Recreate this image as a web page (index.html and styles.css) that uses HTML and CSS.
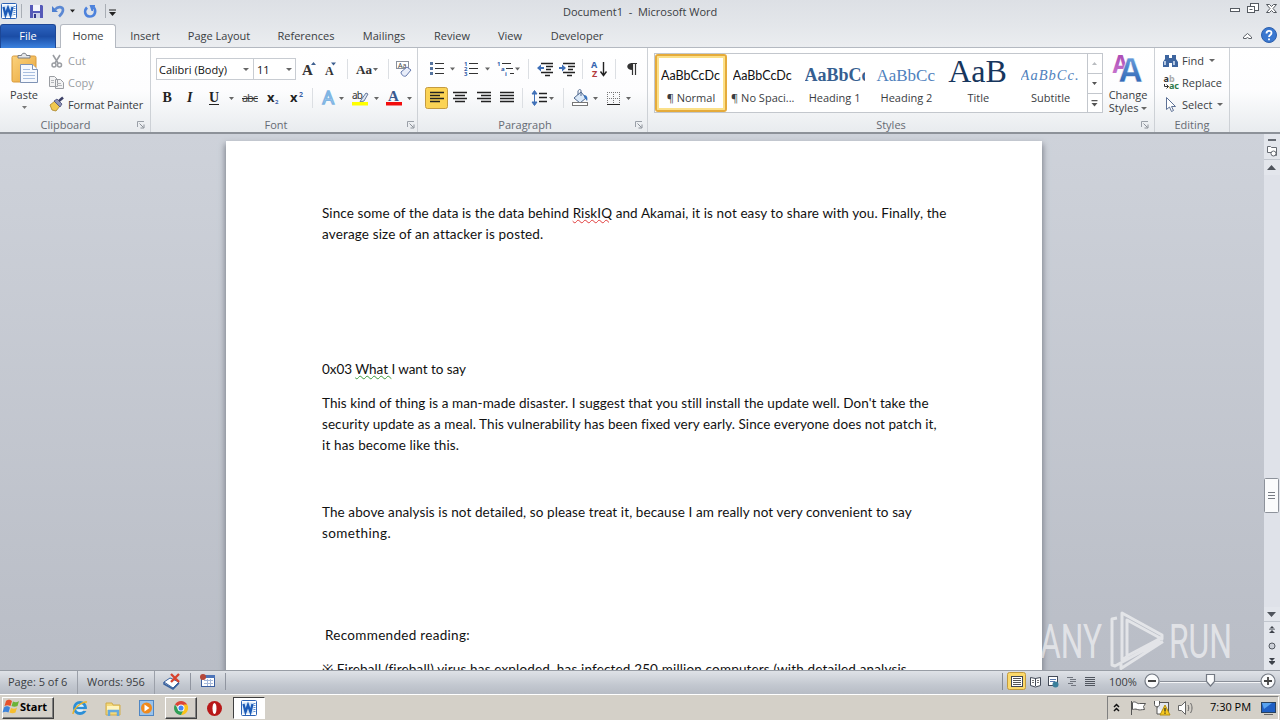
FILE: index.html
```html
<!DOCTYPE html>
<html lang="en">
<head>
<meta charset="utf-8">
<title>Document1 - Microsoft Word</title>
<link rel="stylesheet" href="styles.css">
</head>
<body>
<div class="screen">
<svg width="0" height="0" class="defs">
  <defs>
    <linearGradient id="blue" x1="0" y1="0" x2="0" y2="1"><stop offset="0" stop-color="#7fb2ea"/><stop offset="1" stop-color="#1d54a8"/></linearGradient>
    <linearGradient id="purple" x1="0" y1="0" x2="0" y2="1"><stop offset="0" stop-color="#a03aa8"/><stop offset="1" stop-color="#cf7fd6"/></linearGradient>
    <linearGradient id="orange" x1="0" y1="0" x2="1" y2="1"><stop offset="0" stop-color="#fbd27c"/><stop offset="1" stop-color="#e9a63c"/></linearGradient>
    <symbol id="word" viewBox="0 0 16 16"><rect x=".5" y=".5" width="15" height="15" rx="1" fill="#fff" stroke="#2c62b4"/><path d="M12 3.500h2.500M12 5.500h2.500M12 7.500h2.500M12 9.500h2.500M12 11.500h2.500" stroke="#5f8fd0"/><path d="M1.500 2.500h11v11h-11z" fill="#cfe2f7"/><path d="M2.500 4l2 8 2.500-7 2.500 7 2-8" fill="none" stroke="#1d5cb8" stroke-width="2.300"/></symbol>
    <symbol id="launch" viewBox="0 0 8 8"><path d="M.5 6V.5H7" fill="none" stroke="#9aa0a8"/><path d="M2.500 2.500l4 4M7 3.500V7H3.500" fill="none" stroke="#8a9098"/></symbol>
  </defs>
</svg>

<header class="titlebar">
  <svg class="i" width="130" height="24" viewBox="0 0 130 24">
    <use href="#word" x="1" y="3" width="16" height="16"/>
    <path d="M21.500 4v14M105.500 4v14" stroke="#a9aeb5"/>
    <path d="M30 5h12l1 1v12H30z" fill="#5559b8"/><path d="M33 5h7v6h-7z" fill="#f4f5fb"/><path d="M33 13h7v5h-7z" fill="#cdd1ea"/><path d="M34 14h2v4h-2z" fill="#33388c"/>
    <path d="M52 6v6h6z" fill="#4d7fd1"/><path d="M55 9.500c3-3.500 8-3 8 .5 0 3-2 4.500-4 6.500" fill="none" stroke="#5b88d3" stroke-width="2.600"/>
    <path d="M70 9.500h5l-2.500 3zM109 12h7l-3.500 4zM109 9.500h7v1h-7z" fill="#222"/>
    <path d="M87 7.500c-3 3-2.500 8.500 2.500 9 6 0 7-6 4-9.500" fill="none" stroke="#4d82dc" stroke-width="2.600"/><path d="M89.500 5h5.500v1.500l-2 1v3.500h-1.500z" fill="#4d82dc"/>
  </svg>
  <h1 class="title">Document1 &nbsp;-&nbsp; Microsoft Word</h1>
  <svg class="i" width="54" height="24" viewBox="1226 0 54 24" fill="#fff" stroke="#555a61">
    <rect x="1230.500" y="8.500" width="9" height="3"/>
    <rect x="1250.500" y="3.500" width="8" height="7"/><rect x="1247.500" y="6.500" width="7" height="6"/><path d="M1249.500 9.500h3"/>
    <path d="M1266.500 4.500h3l2 2 2-2h3l-3.500 4 3.500 4h-3l-2-2-2 2h-3l3.500-4z"/>
  </svg>
</header>

<nav class="tabs">
  <a class="tab file">File</a>
  <a class="tab home">Home</a>
  <a class="tab w58">Insert</a>
  <a class="tab w90">Page Layout</a>
  <a class="tab w84">References</a>
  <a class="tab w72">Mailings</a>
  <a class="tab w64">Review</a>
  <a class="tab w52">View</a>
  <a class="tab w82">Developer</a>
  <svg class="i end" width="40" height="24" viewBox="1240 24 40 24">
    <path d="M1243.500 38.500v-1.500l4-3.500 4 3.500v1.500h-2.500l-1.500-1-1.500 1z" fill="#fff" stroke="#5b6068"/>
    <circle cx="1269" cy="35" r="7.500" fill="#3a78d0" stroke="#2d60ad"/><path d="M1266.500 33.500c0-3.500 5-3.500 5-.5 0 2-2.500 2-2.500 4M1269 38.500v1.800" fill="none" stroke="#fff" stroke-width="1.800"/>
  </svg>
</nav>

<section class="ribbon">
  <div class="group clipboard">
    <div class="body">
      <div class="paste">
        <svg class="i" width="44" height="40" viewBox="2 48 44 40">
          <rect x="12" y="56" width="24" height="26" rx="1.500" fill="url(#orange)" stroke="#d99a3a"/>
          <path d="M18 58v-2.500h3.500c0-3 5-3 5 0H30V58z" fill="#e5e7ea" stroke="#777d86"/>
          <path d="M20.500 64.500h12l5 5v13h-17z" fill="#f6f9fe" stroke="#7f93b5"/><path d="M32.500 64.500v5h5" fill="#fff" stroke="#7f93b5"/>
          <path d="M23 69.500h7M23 72.500h12M23 75.500h12M23 78.500h12" stroke="#a9bfe0"/>
        </svg>
        <span class="lbl">Paste</span>
        <svg class="i" width="44" height="8" viewBox="2 102 44 8"><path d="M22 106h5l-2.500 3z" fill="#777"/></svg>
      </div>
      <div class="stack">
        <div class="cmd off"><svg class="i" width="19" height="22" viewBox="49 50 19 22"><path d="M53 55l5 8M60 55l-5 8" stroke="#9a9da2" stroke-width="1.600"/><circle cx="54" cy="65" r="2" fill="none" stroke="#9a9da2" stroke-width="1.500"/><circle cx="59.500" cy="65" r="2" fill="none" stroke="#9a9da2" stroke-width="1.500"/></svg>Cut</div>
        <div class="cmd off"><svg class="i" width="19" height="22" viewBox="49 72 19 22"><path d="M49.500 76.500h5l3 3v7h-8zM55.500 79.500h5l3 3v6h-8z" fill="#f3f3f4" stroke="#9a9da2"/><path d="M51 80.500h3M51 82.500h3M57 83.500h4M57 85.500h5" stroke="#b4b6ba"/></svg>Copy</div>
        <div class="cmd fp"><svg class="i" width="19" height="22" viewBox="49 94 19 22"><path d="M50 105l5-4 5 5-4 5-4-1z" fill="#f1c94f" stroke="#a8832b" stroke-width=".8"/><path d="M54 101l3-2 5 5-2 3z" fill="#8d93b8" stroke="#474d77" stroke-width=".8"/><path d="M59 101l4-3.500" stroke="#3b3f66" stroke-width="2.500"/></svg>Format Painter</div>
      </div>
    </div>
    <div class="caption"><span>Clipboard</span><svg class="i" width="8" height="8"><use href="#launch"/></svg></div>
  </div>

  <div class="group font">
    <div class="body rows">
      <div class="row">
        <div class="combo name"><span>Calibri (Body)</span><b class="arr"></b></div>
        <div class="combo size"><span>11</span><b class="arr"></b></div>
        <svg class="i" width="120" height="22" viewBox="296 58 120 22">
          <g class="serif" fill="#333"><text x="302" y="75" font-size="15">A</text><text x="325" y="75" font-size="12">A</text><text x="356" y="74" font-size="13" textLength="16" lengthAdjust="spacingAndGlyphs">Aa</text></g>
          <path d="M311 65h5l-2.500-3zM331 62.500h5l-2.500 3z" fill="#3d5f8f"/><path d="M373 68h5l-2.500 3z" fill="#666"/>
          <path d="M347.500 59v20M388.500 59v20" stroke="#dcdfe3"/>
          <rect x="396.500" y="61.500" width="12" height="7" fill="#fff" stroke="#8a919c"/><text class="tiny" x="398" y="68" font-size="7">Aa</text>
          <path d="M401 72l6-5 4 3-5 6c-2 1-5-1-5-4z" fill="#e9eefa" stroke="#6479ad"/>
        </svg>
      </div>
      <div class="row">
        <svg class="i" width="260" height="22" viewBox="156 87 260 22">
          <g class="serif" fill="#222"><text x="162.500" y="102" font-size="14">B</text><text x="187" y="102" font-size="14" font-style="italic">I</text><text x="209" y="102" font-size="14">U</text></g>
          <path d="M209 104.500h10" stroke="#222"/><path d="M229 97h5l-2.500 3zM339 97h5l-2.500 3zM374 97h5l-2.500 3zM407 97h5l-2.500 3z" fill="#666"/>
          <text class="sans" x="242" y="102" font-size="11" textLength="16" fill="#444">abc</text><path d="M242 98.500h16" stroke="#333"/>
          <g class="sansb" fill="#222"><text x="267" y="102" font-size="13">x</text><text x="290" y="102" font-size="13">x</text></g>
          <g class="sansb" fill="#3b62a8"><text x="275" y="104" font-size="6">2</text><text x="299" y="97" font-size="7">2</text></g>
          <path d="M312.500 88v20" stroke="#dcdfe3"/>
          <text class="sans" x="322.500" y="104" font-size="18" fill="#e6f3ff" stroke="#7fb5e3" stroke-width="1.400">A</text>
          <text class="sans" x="352" y="99" font-size="10" textLength="11" fill="#333">ab</text><path d="M361 100l5-7 2 1-4 7-4 1z" fill="#dfe7f3" stroke="#5a6f94" stroke-width=".9"/><path d="M352 102h16v3.500h-16z" fill="#ff0"/>
          <text class="serif" x="388" y="101" font-size="15" fill="#38598f">A</text><path d="M386 102h16v3.500h-16z" fill="#f20d0d"/>
        </svg>
      </div>
    </div>
    <div class="caption"><span>Font</span><svg class="i" width="8" height="8"><use href="#launch"/></svg></div>
  </div>

  <div class="group para">
    <div class="body rows">
      <div class="row">
        <svg class="i" width="222" height="22" viewBox="423 58 222 22">
          <g stroke="#333" stroke-width="1.200"><path d="M435 63.500h9M435 68.500h9M435 73.500h9M469 63.500h9M469 68.500h9M469 73.500h9M502 63.500h9M506 68.500h7M510 73.500h4"/></g>
          <path d="M430 62h3v3h-3zM430 67h3v3h-3zM430 72h3v3h-3z" fill="#56749f"/>
          <g class="sansb" fill="#2f5ca8" font-size="6"><text x="464" y="66">1</text><text x="464" y="71">2</text><text x="464" y="76">3</text><text x="497" y="66">1</text><text x="501" y="71">a</text><text x="505" y="76">i</text></g>
          <path d="M450 67.500h5l-2.500 3zM485 67.500h5l-2.500 3zM515 67.500h5l-2.500 3z" fill="#666"/>
          <path d="M528.500 59v20M582.500 59v20M615.500 59v20" stroke="#dcdfe3"/>
          <path d="M541 63.500h12M546 66.500h7M546 69.500h5M541 72.500h12M545 75.500h5M563 63.500h12M568 66.500h7M568 69.500h5M563 72.500h12M567 75.500h5" stroke="#222" stroke-width="1.600"/>
          <path d="M537 68l4-3.500v2.500h3v2h-3v2.500zM566 68l-4-3.500v2.500h-3v2h3v2.500z" fill="#3f70b8"/>
          <g class="sansb" font-size="9"><text x="591" y="68" fill="#3465b0">A</text><text x="592" y="76.500" fill="#b2393c">Z</text></g>
          <path d="M603.500 62v12M600.500 71.500l3 4 3-4" fill="none" stroke="#222" stroke-width="1.400"/>
          <path d="M632.500 63v12M635.500 63v12M631 63.500h6" stroke="#333" stroke-width="1.200"/><path d="M632.500 63c-7 0-7 7 0 7z" fill="#333"/>
        </svg>
      </div>
      <div class="row">
        <svg class="i" width="222" height="22" viewBox="423 87 222 22">
          <rect x="425.500" y="87.500" width="22" height="21" rx="2" fill="#fbd355" stroke="#c59b40"/>
          <path d="M430 92.500h14M430 95.500h10M430 98.500h14M430 101.500h10M453 92.500h14M455 95.500h10M453 98.500h14M455 101.500h10M477 92.500h14M481 95.500h10M477 98.500h14M481 101.500h10M500 92.500h14M500 95.500h14M500 98.500h14M500 101.500h14M539 93.500h8M539 97.500h8M539 101.500h8" stroke="#222" stroke-width="1.400"/>
          <path d="M522.500 88v20M563.500 88v20" stroke="#dcdfe3"/>
          <path d="M534.500 91v13M532 94l2.500-3.500L537 94zM532 102l2.500 3.500L537 102z" fill="#3f70b8" stroke="#3f70b8"/>
          <path d="M549 97h5l-2.500 3zM593 97h5l-2.500 3zM626 97h5l-2.500 3z" fill="#666"/>
          <path d="M574 98l7-6 5 6-6 5z" fill="#dbe9f8" stroke="#51698e"/><path d="M578 95v-4c1-2 3-2 3 0v5" fill="none" stroke="#51698e"/><path d="M584 95c3 0 4 3 3 6l-3-4z" fill="#3b74bd"/><rect x="572.500" y="102.500" width="15" height="3" fill="#fff" stroke="#777"/>
          <path d="M607 92.500h13M607 98.500h13M607.500 92v13M613.500 92v13M619.500 92v13" stroke="#777" stroke-dasharray="1 1"/><path d="M607 104.500h13" stroke="#222"/>
        </svg>
      </div>
    </div>
    <div class="caption"><span>Paragraph</span><svg class="i" width="8" height="8"><use href="#launch"/></svg></div>
  </div>

  <div class="group styles">
    <div class="body">
      <div class="gallery">
        <div class="style on"><span class="sample nrm">AaBbCcDc</span><span class="nm">¶ Normal</span></div>
        <div class="style"><span class="sample nrm">AaBbCcDc</span><span class="nm">¶ No Spaci...</span></div>
        <div class="style"><span class="sample h1">AaBbCc</span><span class="nm">Heading 1</span></div>
        <div class="style"><span class="sample h2">AaBbCc</span><span class="nm">Heading 2</span></div>
        <div class="style"><span class="sample ttl">AaB</span><span class="nm">Title</span></div>
        <div class="style"><span class="sample sub">AaBbCc.</span><span class="nm">Subtitle</span></div>
        <svg class="i" width="15" height="58" viewBox="1088 54 15 58"><path d="M1088.500 54v58M1088 73.500h15M1088 93.500h15" stroke="#c3c7cd"/><path d="M1093 65h5l-2.500-3z" fill="#b9bcc0"/><path d="M1093 82h5l-2.500 3zM1092.500 103h6l-3 3.500zM1092.500 100h6v1.200h-6z" fill="#555"/></svg>
      </div>
      <div class="change">
        <svg class="i" width="48" height="38" viewBox="1104 50 48 38">
          <text class="sansb" x="1112.500" y="73" font-size="25" fill="url(#purple)" textLength="16" lengthAdjust="spacingAndGlyphs">A</text>
          <text class="sansb" x="1119" y="82" font-size="34" fill="url(#blue)" stroke="#fff" stroke-width=".5" textLength="23" lengthAdjust="spacingAndGlyphs">A</text>
        </svg>
        <span class="lbl">Change</span><span class="lbl two">Styles <b class="arr"></b></span>
      </div>
    </div>
    <div class="caption"><span>Styles</span><svg class="i" width="8" height="8"><use href="#launch"/></svg></div>
  </div>

  <div class="group edit">
    <div class="body">
      <div class="stack">
        <div class="cmd"><svg class="i" width="19" height="22" viewBox="1163 50 19 22"><path d="M1165 55h4v3h3v-3h4v4l2 3v5h-6v-4h-3v4h-6v-5l2-3z" fill="#3d659f"/><path d="M1165 61v4M1174 61v4" stroke="#dce8f7" stroke-width="1.500"/></svg>Find<b class="arr"></b></div>
        <div class="cmd"><svg class="i" width="19" height="22" viewBox="1163 72 19 22"><g class="sansb" font-size="9"><text x="1163.500" y="82" fill="#333">a</text><text x="1169" y="82" fill="#aaa">b</text><text x="1169" y="89" fill="#2c7a4b" textLength="10">ac</text></g><path d="M1164.500 84v2.500h4M1166.500 84.500l2 2-2 2" fill="none" stroke="#333"/></svg>Replace</div>
        <div class="cmd"><svg class="i" width="19" height="22" viewBox="1163 94 19 22"><path d="M1166.500 97.500v12l3-2.500 2 4.500 2-1-2-4h4z" fill="#fff" stroke="#5d7196"/></svg>Select<b class="arr"></b></div>
      </div>
    </div>
    <div class="caption"><span>Editing</span></div>
  </div>
</section>

<main class="workspace">
  <article class="page">
    <p class="l1">Since some of the data is the data behind <u class="spell">RiskIQ</u> and Akamai, it is not easy to share with you. Finally, the</p>
    <p class="l2">average size of an attacker is posted.</p>
    <p class="l3 s114">0x03 <u class="gram">What </u>I want to say</p>
    <p class="l4 s13">This kind of thing is a man-made disaster. I suggest that you still install the update well. Don't take the</p>
    <p class="l5">security update as a meal. This vulnerability has been fixed very early. Since everyone does not patch it,</p>
    <p class="l6">it has become like this.</p>
    <p class="l7 s46">The above analysis is not detailed, so please treat it, because I am really not very convenient to say</p>
    <p class="l8">something.</p>
    <p class="l9 s81">Recommended reading:</p>
    <p class="l10 s13">※ Fireball (fireball) virus has exploded, has infected 250 million computers (with detailed analysis</p>
  </article>
  <svg class="i scroll" width="16" height="536" viewBox="1264 134 16 536">
    <path d="M1264 134h16v536h-16z" fill="#dfe2e9"/><path d="M1264 134h16v41h-16zM1264 607h16v63h-16z" fill="#e3e6ec"/><path d="M1264 159.500h16M1264 621.500h16" stroke="#c2c7cf"/>
    <path d="M1268 139h8v2h-8z" fill="#666b73"/><path d="M1267.500 146.500h3l1 1h5v8h-4v-3h-5z" fill="#fff" stroke="#666b73"/><circle cx="1273.500" cy="153.500" r="2.500" fill="#fff" stroke="#666b73"/>
    <path d="M1267 170h9l-4.500-5zM1267 612h9l-4.500 5z" fill="#4f545c"/>
    <rect x="1264.500" y="478.500" width="14" height="34" rx="1" fill="#fafbfc" stroke="#8d929b"/><path d="M1268 492.500h7M1268 495.500h7M1268 498.500h7" stroke="#777c84"/>
    <path d="M1269 629h6l-3-3zM1269 633h6l-3-3zM1269 658h6l-3 3zM1269 662h6l-3 3zM1269 628.500h6v1h-6zM1269 661h6v1h-6z" fill="#3e434b"/><circle cx="1272" cy="646" r="3" fill="#ccd0d8" stroke="#555a62"/>
  </svg>
  <svg class="mark" width="200" height="70" viewBox="1036 600 200 70">
    <g class="wm"><text x="1040" y="658" font-size="49" textLength="62" lengthAdjust="spacingAndGlyphs">ANY</text><text x="1169" y="658" font-size="49" textLength="63" lengthAdjust="spacingAndGlyphs">RUN</text></g>
    <path d="M1117 618l-5 1v46l3 1 46-25M1128 656l-6 4v-47l40 22v4l-35-19v36l34-18M1121 664v4.500l42-27" fill="none" stroke="#fbfbfc" stroke-opacity=".62" stroke-width="3" stroke-linejoin="round"/>
  </svg>
</main>

<footer class="status">
  <span class="cell c1">Page: 5 of 6</span>
  <span class="cell c2">Words: 956</span>
  <svg class="i" width="72" height="23" viewBox="154 671 72 23">
    <path d="M189.500 673v17M224.500 673v17" stroke="#9095a0"/>
    <path d="M163 682l6-4 9 4-6 6z" fill="#fff" stroke="#38629f"/><path d="M163 682v2l9 5 6-6" fill="none" stroke="#38629f" stroke-width="1.500"/><path d="M170 674l8 8M178 674l-8 8" stroke="#d8402b" stroke-width="2.300"/>
    <rect x="200.500" y="675.500" width="13" height="11" fill="#fff" stroke="#3c5f9f"/><path d="M201 675h13v3h-13z" fill="#4c74b9"/><path d="M203 680.500h9M203 683.500h9M206.500 679v7M209.500 679v7" stroke="#a8bbdc"/><circle cx="202" cy="677" r="3" fill="#b5483a"/>
  </svg>
  <svg class="i end" width="105" height="23" viewBox="1002 671 105 23">
    <path d="M1002.500 673v17" stroke="#858b95"/><rect x="1007.500" y="672.500" width="18" height="17" rx="2" fill="#fbd96b" stroke="#c29a3e"/>
    <rect x="1011.500" y="676.500" width="11" height="10" fill="#fff" stroke="#3f4652"/><path d="M1013 678.500h8M1013 680.500h8M1013 682.500h8M1013 684.500h8" stroke="#555"/>
    <path d="M1030.500 677.500l5 1 5-1v8l-5 1.500-5-1.500zM1035.500 678v8" fill="#fff" stroke="#444b58"/><path d="M1032 680.500h2M1032 682.500h2M1037 680.500h2M1037 682.500h2" stroke="#777"/>
    <rect x="1048.500" y="676.500" width="9" height="9" fill="#fff" stroke="#444b58"/><path d="M1050 679.500h6M1050 681.500h5" stroke="#5a79ae"/><circle cx="1055.500" cy="684.500" r="3" fill="#3b7f9b"/>
    <path d="M1067 677.500h6M1070 679.500h6M1070 681.500h6M1068 683.500h5M1071 685.500h5" stroke="#70757e"/>
    <path d="M1085 677.500h10M1085 679.500h10M1085 681.500h10M1085 683.500h10M1085 685.500h10" stroke="#50555e"/>
  </svg>
  <span class="zoom">100%</span>
  <svg class="i" width="140" height="23" viewBox="1140 671 140 23">
    <path d="M1160 681.500h101" stroke="#8b9099"/><path d="M1160 682.500h101" stroke="#f4f5f7"/>
    <g fill="#fafbfc" stroke="#737983" stroke-width="1.200"><circle cx="1152" cy="681" r="7"/><circle cx="1268" cy="681" r="7"/><path d="M1206.500 674.500h8v7l-4 4.500-4-4.500z"/></g>
    <path d="M1148 681h8M1264 681h8M1268 677v8" stroke="#444" stroke-width="1.800"/>
  </svg>
</footer>

<div class="taskbar">
  <div class="start"><svg class="i" width="17" height="18" viewBox="3 698 17 18"><path d="M6 701c3-2 4-1 6 0l-1.500 5c-2-1-4-1-6 0z" fill="#e6522c"/><path d="M13 701.500c2 1 4 1 6-.5l-1.500 5c-2 1-4 1-6 0z" fill="#6bb33a"/><path d="M4 707.500c3-2 4-1 6 0l-1.500 5c-2-1-4-1-6 0z" fill="#3e84da"/><path d="M11 708c2 1 4 1 6-.5l-1.500 5c-2 1-4 1-6 0z" fill="#f6be2f"/></svg>Start</div>
  <svg class="i quick" width="98" height="24" viewBox="67 695 98 24">
    <circle cx="80" cy="707" r="5.500" fill="#dff1fc" stroke="#2d8fd6" stroke-width="3"/><path d="M75 707h10" stroke="#2d8fd6" stroke-width="2.300"/><path d="M83 708h5v2h-5z" fill="#d4d0c8"/><path d="M73 713c0-5 9-13 14-12" fill="none" stroke="#e7b32d" stroke-width="1.500"/>
    <path d="M106 702h6l1 2h7v10h-14z" fill="#f3d878" stroke="#d1ab48"/><path d="M107 705h12v4h-12z" fill="#fff4bd"/><path d="M109 715v-5h9v5" fill="none" stroke="#65a9dc" stroke-width="2.500"/>
    <rect x="139.500" y="699.500" width="14" height="15" fill="#9ac3eb" stroke="#4f86c3"/><circle cx="146.500" cy="707" r="5.500" fill="#f08a1d"/><path d="M144.500 703.500l5 3.500-5 3.500z" fill="#fff"/>
  </svg>
  <div class="task up"><svg class="i" width="14" height="14" viewBox="0 0 16 16"><path d="M8 8L1.100 4A8 8 0 0 1 15 4z" fill="#db4437"/><path d="M15 4A8 8 0 0 1 8 16L11 9V4z" fill="#fbc21a"/><path d="M1.100 4A8 8 0 0 0 8 16L11 10 5 10z" fill="#2f9e55"/><circle cx="8" cy="8" r="4" fill="#fff"/><circle cx="8" cy="8" r="2.900" fill="#4285f4"/></svg></div>
  <svg class="i" width="36" height="24" viewBox="197 695 36 24"><ellipse cx="214.500" cy="707.500" rx="7.500" ry="7.500" fill="#b81818"/><ellipse cx="214.500" cy="707.500" rx="2" ry="5.500" fill="#fff"/></svg>
  <div class="task down"><svg class="i" width="16" height="16"><use href="#word"/></svg></div>
  <div class="tray">
    <svg class="i" width="98" height="22" viewBox="1107 696 98 22">
      <path d="M1113 706l2.500-2.500 2.500 2.500M1113 710l2.500-2.500 2.500 2.500" fill="none" stroke="#111" stroke-width="1.500"/>
      <path d="M1130.500 700v14" stroke="#555"/><path d="M1131.500 701.500c3-2 5 2 7 1h6l-2 3 1 3c-3 0-5 1-7 0s-4 0-5 0z" fill="#fff" stroke="#555"/>
      <rect x="1156.500" y="701.500" width="11" height="9" fill="#e3e7ee" stroke="#555"/><path d="M1153.500 700v3.500c0 3 5 3 5 0V700M1156 706v7h8" fill="#fff" stroke="#555"/><path d="M1164 704l5 10h-10z" fill="#f8c91d" stroke="#b38e11"/><path d="M1164 707v3.500M1164 711.500v1.300" stroke="#222" stroke-width="1.200"/>
      <path d="M1177.500 704.500h3l4-4v13l-4-4h-3z" fill="#fff" stroke="#666"/><path d="M1187 704c1 2 1 4 0 6M1189.500 702c2 3 2 7 0 10" fill="none" stroke="#666"/>
    </svg>
    <span class="clock">7:30 PM</span>
    <svg class="i end" width="18" height="18" viewBox="1259 698 18 18"><rect x="1260.500" y="701.500" width="14" height="10" fill="#1f5fc4" stroke="#27415f"/><path d="M1261 702h10l-8 6z" fill="#58a2ee"/><path d="M1263 713.500h9" stroke="#666"/></svg>
  </div>
</div>
</div>
</body>
</html>
```

FILE: styles.css
```css
* { box-sizing: border-box; }
body { margin: 0; font-family: "Open Sans", "Noto Sans", sans-serif; font-size: 11px; color: #3a3d42; }
p, h1 { margin: 0; font-weight: normal; }
.screen { width: 1280px; height: 720px; overflow: hidden; display: flex; flex-direction: column; }
.defs { position: absolute; }
.i { display: block; flex: none; overflow: visible; }
.end { margin-left: auto; }
svg .serif { font-family: "Liberation Serif", serif; font-weight: bold; }
svg .sans { font-family: "Noto Sans", sans-serif; }
svg .sansb { font-family: "Noto Sans", sans-serif; font-weight: bold; }
svg .tiny { font-family: "Noto Sans", sans-serif; fill: #444; }

.titlebar { height: 24px; flex: none; display: flex; background: linear-gradient(#dde0e5, #e3e6ea); }
.title { flex: 1; padding-left: 433px; font-size: 11px; line-height: 24px; }

.tabs { height: 24px; flex: none; display: flex; background: linear-gradient(#e3e6ea, #ebedf0); border-bottom: 1px solid #b4b9c1; }
.tab { text-align: center; line-height: 24px; height: 24px; }
.file { width: 56px; color: #fff; background: linear-gradient(#2d64c0, #1b4da6 50%, #3c82df); border: 1px solid #1d4796; border-bottom: 0; border-radius: 3px 3px 0 0; line-height: 22px; }
.home { width: 56px; margin-left: 4px; background: #fff; border: 1px solid #b4b9c1; border-bottom: 0; border-radius: 3px 3px 0 0; line-height: 22px; }
.w58 { width: 58px; } .w90 { width: 90px; } .w84 { width: 84px; } .w72 { width: 72px; }
.w64 { width: 64px; } .w52 { width: 52px; } .w82 { width: 82px; }

.ribbon { height: 86px; flex: none; display: flex; background: linear-gradient(#fff 0, #fdfdfe 50%, #e9ecef 98%); border-bottom: 2px solid #8d9299; }
.group { height: 84px; display: flex; flex-direction: column; border-right: 1px solid #cdd1d6; }
.clipboard { width: 151px; } .font { width: 267px; } .para { width: 230px; } .styles { width: 507px; } .edit { width: 75px; }
.body { height: 69px; display: flex; }
.rows { flex-direction: column; padding: 10px 0 0 5px; gap: 7px; }
.row { display: flex; height: 22px; }
.caption { height: 15px; display: flex; align-items: center; color: #666b73; padding-right: 5px; }
.caption span { flex: 1; text-align: center; line-height: 15px; }
.clipboard .caption span { padding-right: 6px; }
.styles .caption span { padding-right: 7px; }
.font .caption { padding-right: 2px; }
.font .caption span { padding-right: 6px; }
.edit .caption span { padding-left: 5px; }
.para .caption { padding-right: 4px; }
.para .caption span { padding-right: 3px; }
.paste { width: 44px; margin-left: 2px; display: flex; flex-direction: column; align-items: center; }
.lbl { line-height: 14px; }
.stack { padding-top: 2px; margin-left: 3px; }
.cmd { height: 22px; display: flex; align-items: flex-start; white-space: nowrap; line-height: 21px; }
.fp { letter-spacing: -.12px; }
.off { color: #9a9da2; }
.edit .stack { margin-left: 8px; }
.arr { display: inline-block; width: 0; height: 0; border: 3px solid transparent; border-top-color: #666; border-bottom: 0; }
.cmd .arr { margin: 9px 0 0 5px; }
.combo { height: 22px; border: 1px solid #c8ccd2; background: #fff; display: flex; align-items: center; justify-content: space-between; padding: 0 4px 0 2px; color: #111; }
.name { width: 98px; } .size { width: 43px; margin-left: -1px; padding: 0 3px; }

.gallery { width: 449px; height: 60px; margin: 5px 0 0 6px; border: 1px solid #c3c7cd; background: #fff; display: flex; }
.style { width: 72px; height: 58px; display: flex; flex-direction: column; align-items: center; overflow: hidden; }
.style:nth-child(6) { width: 73px; }
.on { border: 2px solid #e5ab3b; box-shadow: inset 0 0 0 2px #fbe089; border-radius: 3px; }
.sample { width: 60px; height: 35px; line-height: 43px; overflow: hidden; white-space: nowrap; color: #111; }
.on .sample { height: 33px; line-height: 39px; }
.nm { line-height: 17px; white-space: nowrap; }
.nrm { font-family: Lato, sans-serif; font-size: 12.500px; }
.h1 { font-family: "Liberation Serif", serif; font-weight: bold; font-size: 18px; color: #365f91; }
.h2 { font-family: "Liberation Serif", serif; font-size: 17px; color: #4f81bd; }
.ttl { font-family: "Liberation Serif", serif; font-size: 32px; line-height: 35px; color: #17365d; }
.sub { font-family: "Liberation Serif", serif; font-style: italic; font-size: 14.500px; letter-spacing: 1px; color: #4f81bd; }
.change { width: 50px; display: flex; flex-direction: column; align-items: center; padding-top: 2px; }
.change .lbl { line-height: 13px; }
.two .arr { vertical-align: 2px; }

.workspace { position: relative; height: 536px; flex: none; display: flex; justify-content: flex-end; background: linear-gradient(#ced2da, #b9bdc6); overflow: hidden; }
.page { width: 816px; height: 600px; margin: 7px 222px 0 0; background: #fff; box-shadow: 0 4px 6px 1px #7c818b; padding: 62px 0 0 96px; font-family: Lato, sans-serif; font-size: 13.500px; line-height: 21px; letter-spacing: .1px; font-variant-ligatures: none; color: #111; }
.page p { white-space: nowrap; height: 21px; }
.page .s114 { margin-top: 114px; } .page .s13 { margin-top: 13px; } .page .s46 { margin-top: 46px; } .page .s81 { margin-top: 81px; }
.page .l2, .page .l6 { letter-spacing: .15px; }
.page .l3 { letter-spacing: -.05px; }
.page .l4, .page .l5 { letter-spacing: .07px; }
.page .l8 { letter-spacing: .4px; }
.page .l9 { padding-left: 3px; letter-spacing: .3px; }
.page .l10 { letter-spacing: .16px; }
.spell { text-decoration: underline wavy #e03c3c 1px; text-underline-offset: 1px; }
.gram { text-decoration: underline wavy #3a9a3a 1px; text-underline-offset: 1px; }
.mark { position: absolute; left: 1036px; top: 466px; }
.wm { font-family: Roboto, sans-serif; fill: #fbfbfc; fill-opacity: .62; }

.status { height: 24px; flex: none; display: flex; background: linear-gradient(#dfe2e7, #c3c8d0 60%, #b7bcc5); border-top: 1px solid #989da5; }
.cell { line-height: 21px; border-right: 1px solid #9ba0a9; }
.c1 { width: 78px; padding-left: 8px; } .c2 { width: 77px; padding-left: 9px; }
.zoom { width: 33px; line-height: 21px; padding-left: 2px; }

.taskbar { height: 26px; flex: none; display: flex; align-items: center; background: #d4d0c8; border-top: 1px solid #fff; }
.start { width: 52px; height: 22px; margin-left: 2px; display: flex; align-items: center; background: #d4d0c8; border: 1px solid; border-color: #fff #404040 #404040 #fff; box-shadow: inset -1px -1px 0 #808080; font-family: "Noto Sans", sans-serif; font-weight: bold; line-height: 18px; padding-bottom: 2px; color: #000; }
.quick { margin-left: 13px; }
.task { width: 32px; height: 22px; display: flex; align-items: center; justify-content: center; border: 1px solid; }
.up { border-color: #fff #404040 #404040 #fff; box-shadow: inset -1px -1px 0 #808080; }
.down { border-color: #404040 #fff #fff #404040; background: #fff; }
.tray { margin-left: auto; width: 172px; height: 24px; margin-right: 1px; display: flex; align-items: center; border: 1px solid; border-color: #808080 #fff #fff #808080; color: #000; }
.clock { padding: 0 0 2px 4px; }
```
